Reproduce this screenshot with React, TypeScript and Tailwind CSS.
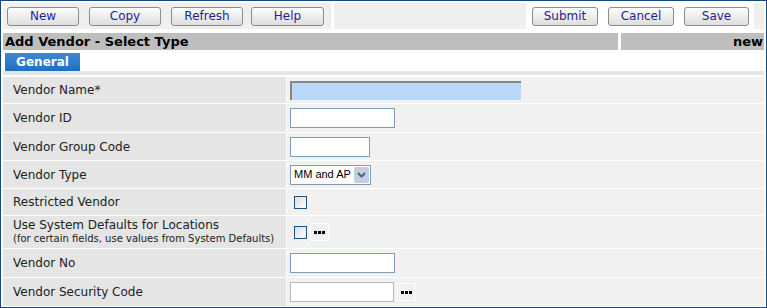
import React from 'react';

const font = { fontFamily: '"DejaVu Sans", Verdana, sans-serif' };

function ToolButton({ label, className = '' }: { label: string; className?: string }) {
  return (
    <button
      className={`h-[19px] rounded-[3px] border border-[#8c8c8c] bg-gradient-to-b from-[#fdfdfd] to-[#dedede] text-[12px] leading-none text-[#1f1f8f] ${className}`}
    >
      {label}
    </button>
  );
}

function Ellipsis() {
  return (
    <span className="ml-[3px] flex h-[18px] w-[19px] items-center justify-center gap-[1px] border border-white">
      <i className="block h-[3px] w-[3px] bg-black" />
      <i className="block h-[3px] w-[3px] bg-black" />
      <i className="block h-[3px] w-[3px] bg-black" />
    </span>
  );
}

function Checkbox() {
  return <span className="block h-[13px] w-[13px] border border-[#1c5183] bg-gradient-to-br from-[#dcdcd7] to-white" />;
}

function TextBox({ w }: { w: string }) {
  return <span className={`block h-[20px] ${w} border border-[#7f9db9] bg-white`} />;
}

interface Row {
  label: React.ReactNode;
  h: string;
  field: React.ReactNode;
}

export default function App() {
  const rows: Row[] = [
    {
      label: 'Vendor Name*',
      h: 'h-[26px]',
      field: (
        <span className="block h-[19px] w-[231px] border-t-2 border-l-2 border-t-[#8a877f] border-l-[#8a877f] bg-[#b9d9fb]" />
      ),
    },
    { label: 'Vendor ID', h: 'h-[28px]', field: <TextBox w="w-[105px]" /> },
    { label: 'Vendor Group Code', h: 'h-[27px]', field: <TextBox w="w-[80px]" /> },
    {
      label: 'Vendor Type',
      h: 'h-[27px]',
      field: (
        <span className="flex h-[20px] w-[81px] items-center border border-[#7f9db9] bg-white pl-[3px] pr-[1px]">
          <span
            className="flex-1 whitespace-nowrap text-[11px] text-black"
            style={{ fontFamily: '"Liberation Sans", Arial, sans-serif' }}
          >
            MM and AP
          </span>
          <span className="flex h-[16px] w-[15px] items-center justify-center rounded-[2px] bg-[#c3cfdf]">
            <svg width="9" height="6" viewBox="0 0 9 6">
              <path d="M1 1l3.5 3.5L8 1" fill="none" stroke="#4d6185" strokeWidth="2" />
            </svg>
          </span>
        </span>
      ),
    },
    { label: 'Restricted Vendor', h: 'h-[26px]', field: <span className="pl-[4px]"><Checkbox /></span> },
    {
      label: (
        <div className="leading-tight">
          <div>Use System Defaults for Locations</div>
          <div className="text-[10px]">(for certain fields, use values from System Defaults)</div>
        </div>
      ),
      h: 'h-[32px]',
      field: (
        <span className="flex items-center pl-[4px]">
          <Checkbox />
          <Ellipsis />
        </span>
      ),
    },
    { label: 'Vendor No', h: 'h-[28px]', field: <TextBox w="w-[105px]" /> },
    {
      label: 'Vendor Security Code',
      h: 'h-[28px]',
      field: (
        <span className="flex items-center">
          <span className="block h-[20px] w-[104px] border border-[#b8b8b8] bg-white" />
          <Ellipsis />
        </span>
      ),
    },
  ];

  return (
    <div
      className="h-[308px] w-[767px] overflow-hidden border border-[#15497c] bg-white text-[#222]"
      style={font}
    >
      {/* toolbar */}
      <div className="flex h-[31px] items-stretch gap-[3px] px-[2px] pt-[2px] pb-[3px]">
        <div className="flex w-[328px] items-center bg-[#efefef] pl-[4px]">
          <ToolButton label="New" className="w-[72px]" />
          <ToolButton label="Copy" className="ml-[10px] w-[72px]" />
          <ToolButton label="Refresh" className="ml-[10px] w-[72px]" />
          <ToolButton label="Help" className="ml-[8px] w-[73px]" />
        </div>
        <div className="flex-1 bg-[#efefef]" />
        <div className="flex w-[222px] items-center gap-[10px] bg-white pl-[3px]">
          <ToolButton label="Submit" className="w-[66px]" />
          <ToolButton label="Cancel" className="w-[66px]" />
          <ToolButton label="Save" className="w-[65px]" />
        </div>
        <div className="w-[10px] bg-[#efefef]" />
      </div>

      {/* title bar */}
      <div className="mx-[2px] mt-[1px] flex h-[17px] gap-[3px] text-[13px] font-bold leading-[17px] text-black">
        <div className="w-[615px] bg-[#bebebe] pl-[2px]">Add Vendor - Select Type</div>
        <div className="flex-1 bg-[#bebebe] pr-[1px] text-right">new</div>
      </div>

      {/* tab */}
      <div className="mt-[3px] flex h-[18px] px-[4px]">
        <div className="flex w-[75px] items-center justify-center bg-gradient-to-b from-[#3b8ad6] to-[#1f70c0] text-[12px] font-bold text-white">
          General
        </div>
      </div>
      <div className="mx-[2px] h-[4px] bg-[#e4e5e4]" />

      {/* form */}
      <div className="mx-[2px] mt-[2px] flex flex-col gap-px">
        {rows.map((r, i) => (
          <div key={i} className={`flex ${r.h} gap-px`}>
            <div className="flex w-[283px] items-center bg-[#e4e5e4] pl-[10px] text-[12px] text-[#222]">{r.label}</div>
            <div className="flex flex-1 items-center bg-[#f0f1f0] pl-[3px]">{r.field}</div>
          </div>
        ))}
      </div>
    </div>
  );
}
